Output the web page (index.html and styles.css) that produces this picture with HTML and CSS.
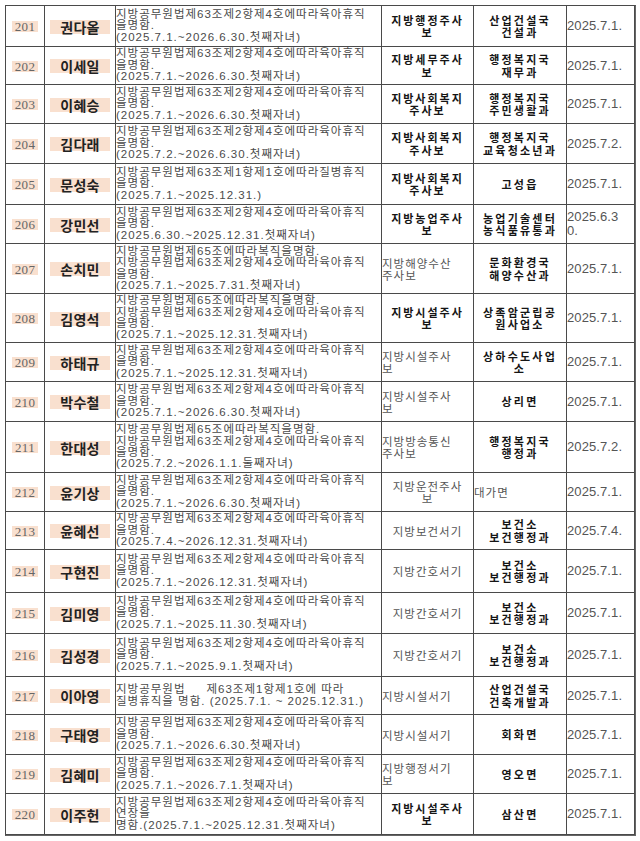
FILE: index.html
```html
<!DOCTYPE html>
<html lang="ko">
<head>
<meta charset="utf-8">
<title>인사발령</title>
<link rel="stylesheet" href="styles.css">
</head>
<body>
<table class="roster">
<colgroup><col class="c1"><col class="c2"><col class="c3"><col class="c4"><col class="c5"><col class="c6"></colgroup>
<tbody>
<tr class="h41"><td class="no"><span>201</span></td><td class="nm"><span>권다올</span></td><td class="desc">지방공무원법제63조제2항제4호에따라육아휴직<br>을명함.<br>(2025.7.1.~2026.6.30.첫째자녀)</td><td class="gr b">지방행정주사<br>보</td><td class="dp b">산업건설국<br>건설과</td><td class="dd">2025.7.1.</td></tr>
<tr class="h38"><td class="no"><span>202</span></td><td class="nm"><span>이세일</span></td><td class="desc">지방공무원법제63조제2항제4호에따라육아휴직<br>을명함.<br>(2025.7.1.~2026.6.30.첫째자녀)</td><td class="gr b">지방세무주사<br>보</td><td class="dp b">행정복지국<br>재무과</td><td class="dd">2025.7.1.</td></tr>
<tr class="h39"><td class="no"><span>203</span></td><td class="nm"><span>이혜승</span></td><td class="desc">지방공무원법제63조제2항제4호에따라육아휴직<br>을명함.<br>(2025.7.1.~2026.6.30.첫째자녀)</td><td class="gr b">지방사회복지<br>주사보</td><td class="dp b">행정복지국<br>주민생활과</td><td class="dd">2025.7.1.</td></tr>
<tr class="h40"><td class="no"><span>204</span></td><td class="nm"><span>김다래</span></td><td class="desc">지방공무원법제63조제2항제4호에따라육아휴직<br>을명함.<br>(2025.7.2.~2026.6.30.첫째자녀)</td><td class="gr b">지방사회복지<br>주사보</td><td class="dp b">행정복지국<br>교육청소년과</td><td class="dd">2025.7.2.</td></tr>
<tr class="h41"><td class="no"><span>205</span></td><td class="nm"><span>문성숙</span></td><td class="desc">지방공무원법제63조제1항제1호에따라질병휴직<br>을명함.<br>(2025.7.1.~2025.12.31.)</td><td class="gr b">지방사회복지<br>주사보</td><td class="dp b">고성읍</td><td class="dd">2025.7.1.</td></tr>
<tr class="h39"><td class="no"><span>206</span></td><td class="nm"><span>강민선</span></td><td class="desc">지방공무원법제63조제2항제4호에따라육아휴직<br>을명함.<br>(2025.6.30.~2025.12.31.첫째자녀)</td><td class="gr b">지방농업주사<br>보</td><td class="dp b">농업기술센터<br>농식품유통과</td><td class="dd">2025.6.3<br>0.</td></tr>
<tr class="h50"><td class="no"><span>207</span></td><td class="nm"><span>손치민</span></td><td class="desc">지방공무원법제65조에따라복직을명함.<br>지방공무원법제63조제2항제4호에따라육아휴직<br>을명함.<br>(2025.7.1.~2025.7.31.첫째자녀)</td><td class="gr">지방해양수산<br>주사보</td><td class="dp b">문화환경국<br>해양수산과</td><td class="dd">2025.7.1.</td></tr>
<tr class="h49"><td class="no"><span>208</span></td><td class="nm"><span>김영석</span></td><td class="desc">지방공무원법제65조에따라복직을명함.<br>지방공무원법제63조제2항제4호에따라육아휴직<br>을명함.<br>(2025.7.1.~2025.12.31.첫째자녀)</td><td class="gr b">지방시설주사<br>보</td><td class="dp b">상족암군립공<br>원사업소</td><td class="dd">2025.7.1.</td></tr>
<tr class="h39"><td class="no"><span>209</span></td><td class="nm"><span>하태규</span></td><td class="desc">지방공무원법제63조제2항제4호에따라육아휴직<br>을명함.<br>(2025.7.1.~2025.12.31.첫째자녀)</td><td class="gr">지방시설주사<br>보</td><td class="dp b">상하수도사업<br>소</td><td class="dd">2025.7.1.</td></tr>
<tr class="h40"><td class="no"><span>210</span></td><td class="nm"><span>박수철</span></td><td class="desc">지방공무원법제63조제2항제4호에따라육아휴직<br>을명함.<br>(2025.7.1.~2026.6.30.첫째자녀)</td><td class="gr">지방시설주사<br>보</td><td class="dp b">상리면</td><td class="dd">2025.7.1.</td></tr>
<tr class="h51"><td class="no"><span>211</span></td><td class="nm"><span>한대성</span></td><td class="desc">지방공무원법제65조에따라복직을명함.<br>지방공무원법제63조제2항제4호에따라육아휴직<br>을명함.<br>(2025.7.2.~2026.1.1.둘째자녀)</td><td class="gr">지방방송통신<br>주사보</td><td class="dp b">행정복지국<br>행정과</td><td class="dd">2025.7.2.</td></tr>
<tr class="h39"><td class="no"><span>212</span></td><td class="nm"><span>윤기상</span></td><td class="desc">지방공무원법제63조제2항제4호에따라육아휴직<br>을명함.<br>(2025.7.1.~2026.6.30.첫째자녀)</td><td class="gr c">지방운전주사<br>보</td><td class="dp">대가면</td><td class="dd">2025.7.1.</td></tr>
<tr class="h38"><td class="no"><span>213</span></td><td class="nm"><span>윤혜선</span></td><td class="desc">지방공무원법제63조제2항제4호에따라육아휴직<br>을명함.<br>(2025.7.4.~2026.12.31.첫째자녀)</td><td class="gr c">지방보건서기</td><td class="dp b">보건소<br>보건행정과</td><td class="dd">2025.7.4.</td></tr>
<tr class="h43"><td class="no"><span>214</span></td><td class="nm"><span>구현진</span></td><td class="desc">지방공무원법제63조제2항제4호에따라육아휴직<br>을명함.<br>(2025.7.1.~2026.12.31.첫째자녀)</td><td class="gr c">지방간호서기</td><td class="dp b">보건소<br>보건행정과</td><td class="dd">2025.7.1.</td></tr>
<tr class="h41"><td class="no"><span>215</span></td><td class="nm"><span>김미영</span></td><td class="desc">지방공무원법제63조제2항제4호에따라육아휴직<br>을명함.<br>(2025.7.1.~2025.11.30.첫째자녀)</td><td class="gr c">지방간호서기</td><td class="dp b">보건소<br>보건행정과</td><td class="dd">2025.7.1.</td></tr>
<tr class="h43"><td class="no"><span>216</span></td><td class="nm"><span>김성경</span></td><td class="desc">지방공무원법제63조제2항제4호에따라육아휴직<br>을명함.<br>(2025.7.1.~2025.9.1.첫째자녀)</td><td class="gr c">지방간호서기</td><td class="dp b">보건소<br>보건행정과</td><td class="dd">2025.7.1.</td></tr>
<tr class="h38"><td class="no"><span>217</span></td><td class="nm"><span>이아영</span></td><td class="desc">지방공무원법&nbsp;&nbsp;&nbsp;&nbsp;&nbsp;제63조제1항제1호에 따라<br>질병휴직을 명함. (2025.7.1. ~ 2025.12.31.)</td><td class="gr">지방시설서기</td><td class="dp b">산업건설국<br>건축개발과</td><td class="dd">2025.7.1.</td></tr>
<tr class="h40"><td class="no"><span>218</span></td><td class="nm"><span>구태영</span></td><td class="desc">지방공무원법제63조제2항제4호에따라육아휴직<br>을명함.<br>(2025.7.1.~2026.6.30.첫째자녀)</td><td class="gr">지방시설서기</td><td class="dp b">회화면</td><td class="dd">2025.7.1.</td></tr>
<tr class="h39"><td class="no"><span>219</span></td><td class="nm"><span>김혜미</span></td><td class="desc">지방공무원법제63조제2항제4호에따라육아휴직<br>을명함.<br>(2025.7.1.~2026.7.1.첫째자녀)</td><td class="gr">지방행정서기<br>보</td><td class="dp b">영오면</td><td class="dd">2025.7.1.</td></tr>
<tr class="h41"><td class="no"><span>220</span></td><td class="nm"><span>이주헌</span></td><td class="desc">지방공무원법제63조제2항제4호에따라육아휴직<br>연장을<br>명함.(2025.7.1.~2025.12.31.첫째자녀)</td><td class="gr b">지방시설주사<br>보</td><td class="dp b">삼산면</td><td class="dd">2025.7.1.</td></tr>
</tbody>
</table>
</body>
</html>
```

FILE: styles.css
```css
html, body {
  margin: 0;
  padding: 0;
  background: #ffffff;
}

.roster {
  border-collapse: separate;
  border-spacing: 0;
  table-layout: fixed;
  width: 631px;
  margin: 5px 0 0 5px;
  font-family: "Liberation Sans", "Noto Sans CJK KR", sans-serif;
  border-top: 1px solid #4a4a4a;
  border-left: 1px solid #4a4a4a;
  border-right: 1px solid #666;
  border-bottom: 1px solid #666;
}

.c1 { width: 39px; }
.c2 { width: 71px; }
.c3 { width: 266px; }
.c4 { width: 92px; }
.c5 { width: 93px; }
.c6 { width: 68px; }

.roster td {
  border-right: 1px solid #4a4a4a;
  border-bottom: 1px solid #4a4a4a;
  padding: 0;
  vertical-align: middle;
  overflow: visible;
}

.h38 { height: 38px; }
.h39 { height: 39px; }
.h40 { height: 40px; }
.h41 { height: 41px; }
.h43 { height: 43px; }
.h49 { height: 49px; }
.h50 { height: 50px; }
.h51 { height: 51px; }

.no {
  text-align: center;
}
.no span {
  display: inline-block;
  width: 26px;
  height: 11px;
  line-height: 12px;
  background: #f9e0cf;
  font-family: "Liberation Serif", serif;
  font-size: 13px;
  letter-spacing: 0.4px;
  color: #666;
  vertical-align: middle;
}

.nm {
  text-align: center;
}
.nm span {
  display: inline-block;
  width: 60px;
  height: 14px;
  line-height: 14px;
  background: #f9e0cf;
  font-family: "Noto Sans CJK KR", sans-serif;
  font-weight: 700;
  font-size: 14px;
  letter-spacing: 0.3px;
  color: #222;
  vertical-align: middle;
}

.desc {
  padding: 0 0 0 3px;
  font-size: 11.5px;
  line-height: 11.4px;
  letter-spacing: 1px;
  color: #4a4a4a;
  white-space: nowrap;
}

.gr, .dp {
  font-family: "Noto Sans CJK KR", sans-serif;
  font-size: 11.5px;
  line-height: 12px;
  letter-spacing: 1px;
  color: #555;
  text-align: left;
  white-space: nowrap;
}
.gr { padding-left: 6px; }
.dp { padding-left: 8px; }

.gr.c {
  text-align: center;
  padding-left: 0;
}

.gr.b, .dp.b {
  text-align: center;
  padding-left: 0;
  font-weight: 700;
  font-size: 11px;
  line-height: 12.4px;
  letter-spacing: 2px;
  color: #151515;
}
.dp.b {
  letter-spacing: 2.2px;
}

.dd {
  padding-left: 5px;
  font-size: 13px;
  line-height: 14px;
  letter-spacing: 0.1px;
  color: #555;
}
```
